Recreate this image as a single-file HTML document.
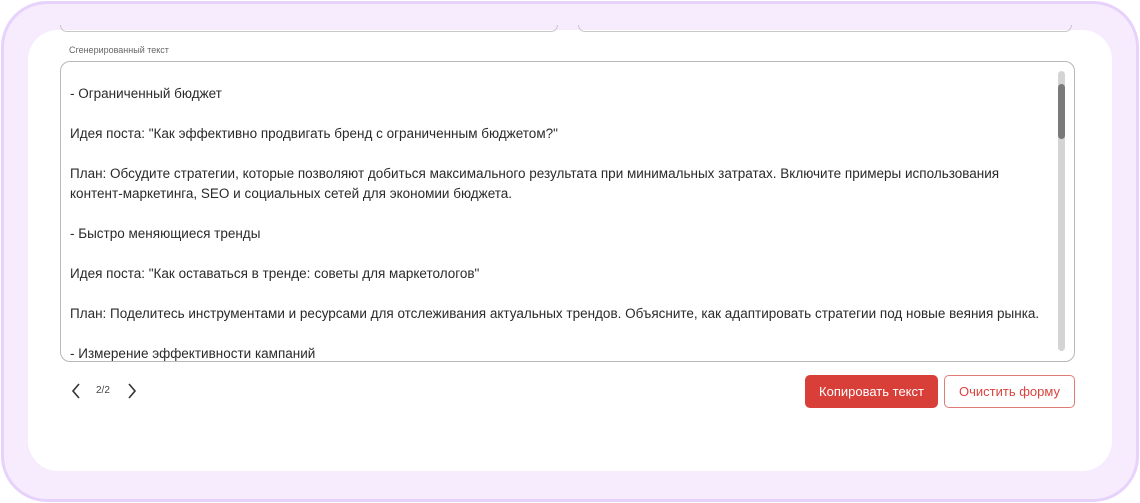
<!DOCTYPE html>
<html><head><meta charset="utf-8"><style>
*{box-sizing:border-box;margin:0;padding:0}
body{width:1140px;height:503px;background:#fff;font-family:"Liberation Sans",sans-serif;overflow:hidden;position:relative}
.outer{position:absolute;left:1px;top:1px;width:1138px;height:501px;border:3px solid #e6d2fb;border-radius:46px;background:#f7ebfe}
.card{position:absolute;left:28px;top:30px;width:1084px;height:441px;background:#fff;border-radius:30px}
.inp{position:absolute;top:25px;height:7px;border:1px solid #c8c8c8;border-top:none;border-radius:0 0 8px 8px}
.lbl{position:absolute;left:69px;top:45px;font-size:9px;color:#666}
.ta{position:absolute;left:60px;top:61px;width:1015px;height:301px;border:1px solid #b8b8b8;border-radius:10px;overflow:hidden}
.txt{position:absolute;left:9px;top:22px;width:985px;font-size:13.5px;line-height:20px;color:#2a2a2a}
.track{position:absolute;left:997px;top:9px;width:7px;height:280px;background:#d4d4d4;border-radius:4px}
.thumb{position:absolute;left:997px;top:22px;width:7px;height:55px;background:#7a7a7a;border-radius:4px}
.btn{position:absolute;top:375px;height:33px;border-radius:5px;font-size:13px;display:flex;align-items:center;justify-content:center}
</style></head><body>
<div class="outer"></div>
<div class="card"></div>
<div class="inp" style="left:60px;width:498px"></div>
<div class="inp" style="left:578px;width:494px"></div>
<div class="lbl">Сгенерированный текст</div>
<div class="ta">
<div class="txt">- Ограниченный бюджет<br><br>Идея поста: "Как эффективно продвигать бренд с ограниченным бюджетом?"<br><br>План: Обсудите стратегии, которые позволяют добиться максимального результата при минимальных затратах. Включите примеры использования<br>контент-маркетинга, SEO и социальных сетей для экономии бюджета.<br><br>- Быстро меняющиеся тренды<br><br>Идея поста: "Как оставаться в тренде: советы для маркетологов"<br><br><span style="white-space:nowrap">План: Поделитесь инструментами и ресурсами для отслеживания актуальных трендов. Объясните, как адаптировать стратегии под новые веяния рынка.</span><br><br>- Измерение эффективности кампаний</div>
<div class="track"></div><div class="thumb"></div>
</div>
<svg style="position:absolute;left:70px;top:382px" width="12" height="18"><path d="M9 2 L3 9 L9 16" fill="none" stroke="#333" stroke-width="1.6"/></svg>
<div style="position:absolute;left:96px;top:385px;font-size:10px;color:#444">2/2</div>
<svg style="position:absolute;left:126px;top:382px" width="12" height="18"><path d="M3 2 L9 9 L3 16" fill="none" stroke="#333" stroke-width="1.6"/></svg>
<div class="btn" style="left:805px;width:133px;background:#d93f39;color:#fff">Копировать текст</div>
<div class="btn" style="left:944px;width:131px;border:1px solid #e07b77;color:#d9433d">Очистить форму</div>
</body></html>
